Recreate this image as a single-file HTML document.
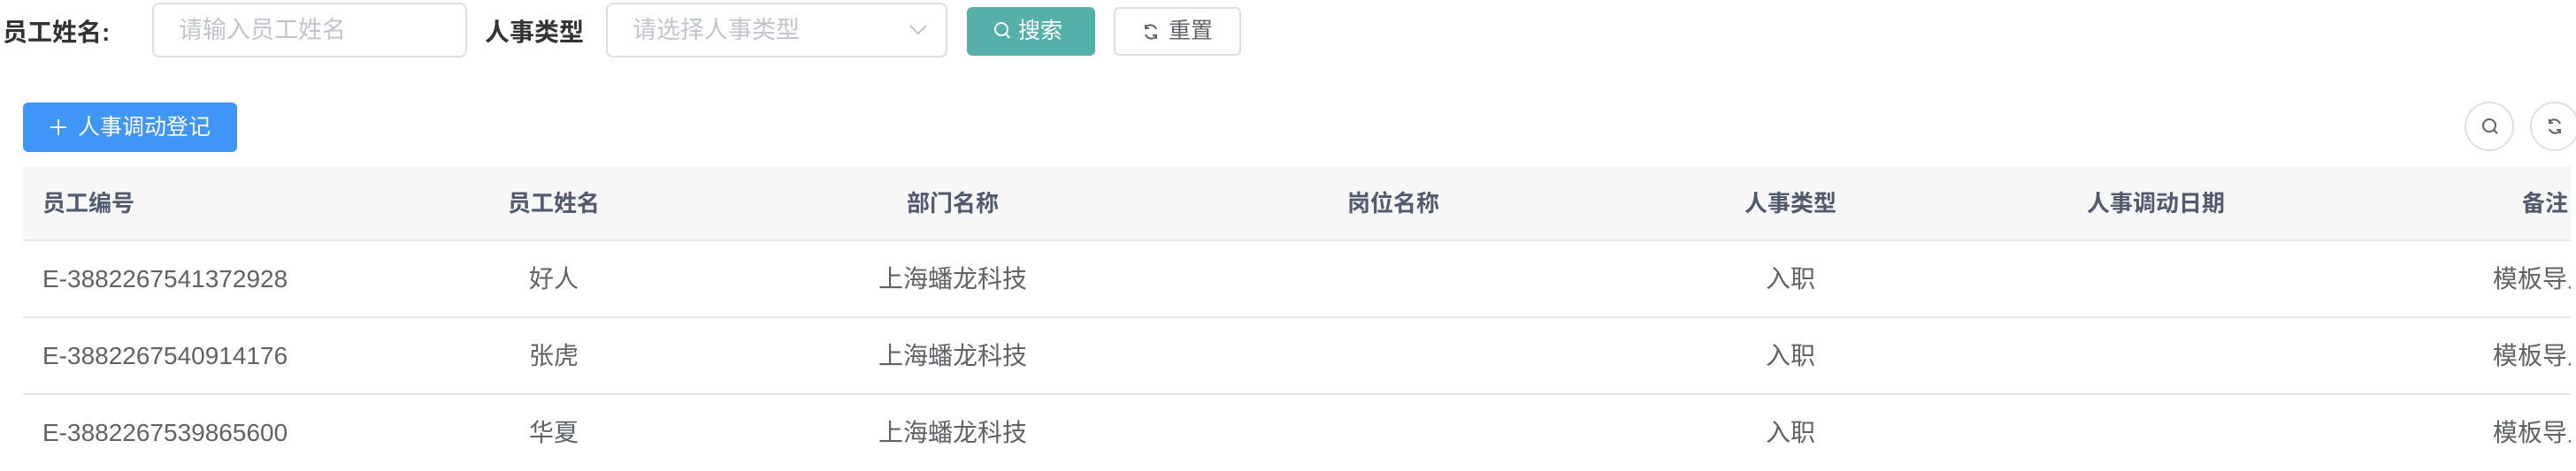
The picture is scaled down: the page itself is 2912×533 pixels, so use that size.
<!DOCTYPE html>
<html><head><meta charset="utf-8"><style>
*{margin:0;padding:0;box-sizing:border-box}
body{width:2912px;height:528px;overflow:hidden;background:#fff;font-family:"Liberation Sans","Noto Sans CJK SC",sans-serif;font-size:28px;color:#606266;position:relative}
.a{position:absolute;white-space:nowrap}
.lbl{font-weight:bold;color:#333;font-size:28px}
.inp{border:2px solid #dcdfe6;border-radius:8px;color:#c0c4cc;padding-left:28px;line-height:58px;font-size:27px}
.c{transform:translateX(-50%)}
.hd{color:#515a6e;font-weight:bold;font-size:26px;line-height:84px;top:188px}
.r{line-height:86px}
.line{position:absolute;left:26px;width:2880px;height:2px;background:#e4e7ed}
</style></head><body>
<div class="a lbl" style="left:3px;top:15px">员工姓名:</div>
<div class="a inp" style="left:172px;top:3px;width:356px;height:62px">请输入员工姓名</div>
<div class="a lbl" style="left:548px;top:15px">人事类型</div>
<div class="a inp" style="left:685px;top:3px;width:386px;height:62px">请选择人事类型
<svg style="position:absolute;left:340px;top:22px" width="22" height="14" viewBox="0 0 22 14"><path d="M2 2l9 9 9-9" fill="none" stroke="#c0c4cc" stroke-width="2"/></svg></div>
<div class="a" style="left:1093px;top:8px;width:145px;height:55px;background:#54b0a8;border-radius:6px;color:#fff;line-height:55px;font-size:25px;padding-left:30px">
<svg style="vertical-align:-3px;margin-right:8px" width="20" height="22" viewBox="0 0 20 22"><circle cx="9" cy="9" r="7" fill="none" stroke="#fff" stroke-width="2"/><path d="M14 14l4 5" stroke="#fff" stroke-width="2"/></svg>搜索</div>
<div class="a" style="left:1259px;top:8px;width:144px;height:55px;border:2px solid #dcdfe6;border-radius:6px;color:#606266;line-height:51px;font-size:25px;padding-left:30px">
<svg style="vertical-align:-3px;margin-right:10px" width="20" height="20" viewBox="0 0 20 20"><path d="M16 7A7 7 0 0 0 4 5M4 13a7 7 0 0 0 12 2" fill="none" stroke="#606266" stroke-width="2"/><path d="M4 2v4h4M16 18v-4h-4" fill="none" stroke="#606266" stroke-width="2"/></svg>重置</div>
<div class="a" style="left:26px;top:116px;width:242px;height:56px;background:#4096f8;border-radius:6px;color:#fff;line-height:56px;font-size:25px;padding-left:30px">
<svg style="vertical-align:-2px;margin-right:12px" width="20" height="20" viewBox="0 0 20 20"><path d="M10 1v18M1 10h18" stroke="#fff" stroke-width="2"/></svg>人事调动登记</div>
<div class="a" style="left:2786px;top:115px;width:56px;height:56px;border:2px solid #dcdfe6;border-radius:50%"><svg style="position:absolute;left:16px;top:15px" width="22" height="22" viewBox="0 0 22 22"><circle cx="10" cy="10" r="7" fill="none" stroke="#606266" stroke-width="2"/><path d="M15 15l4 4" stroke="#606266" stroke-width="2"/></svg></div>
<div class="a" style="left:2860px;top:115px;width:56px;height:56px;border:2px solid #dcdfe6;border-radius:50%"><svg style="position:absolute;left:16px;top:16px" width="20" height="20" viewBox="0 0 20 20"><path d="M16 7A7 7 0 0 0 4 5M4 13a7 7 0 0 0 12 2" fill="none" stroke="#606266" stroke-width="2"/><path d="M4 2v4h4M16 18v-4h-4" fill="none" stroke="#606266" stroke-width="2"/></svg></div>
<div class="a" style="left:26px;top:188px;width:2880px;height:84px;background:#f7f7f7"></div>
<div class="line" style="top:271px"></div>
<div class="line" style="top:358px"></div>
<div class="line" style="top:445px"></div>
<div class="a hd" style="left:48px">员工编号</div>
<div class="a hd c" style="left:626px">员工姓名</div>
<div class="a hd c" style="left:1077px">部门名称</div>
<div class="a hd c" style="left:1575px">岗位名称</div>
<div class="a hd c" style="left:2024px">人事类型</div>
<div class="a hd c" style="left:2437px">人事调动日期</div>
<div class="a hd" style="left:2851px">备注</div>
<div class="a r" style="left:48px;top:273px">E-3882267541372928</div>
<div class="a r c" style="left:626px;top:273px">好人</div>
<div class="a r c" style="left:1077px;top:273px">上海蟠龙科技</div>
<div class="a r c" style="left:2024px;top:273px">入职</div>
<div class="a r" style="left:2818px;top:273px">模板导入</div>
<div class="a r" style="left:48px;top:360px">E-3882267540914176</div>
<div class="a r c" style="left:626px;top:360px">张虎</div>
<div class="a r c" style="left:1077px;top:360px">上海蟠龙科技</div>
<div class="a r c" style="left:2024px;top:360px">入职</div>
<div class="a r" style="left:2818px;top:360px">模板导入</div>
<div class="a r" style="left:48px;top:447px">E-3882267539865600</div>
<div class="a r c" style="left:626px;top:447px">华夏</div>
<div class="a r c" style="left:1077px;top:447px">上海蟠龙科技</div>
<div class="a r c" style="left:2024px;top:447px">入职</div>
<div class="a r" style="left:2818px;top:447px">模板导入</div>
<div class="a" style="left:2906px;top:180px;width:6px;height:348px;background:#fff"></div>
</body></html>
